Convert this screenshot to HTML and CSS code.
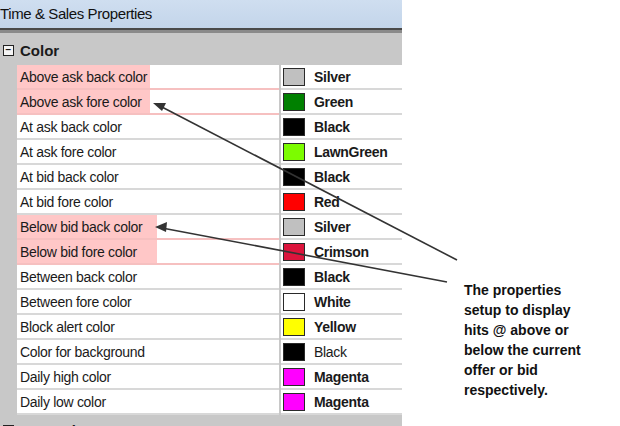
FILE: index.html
```html
<!DOCTYPE html>
<html lang="en">
<head>
    <meta charset="UTF-8">
    <title>Time &amp; Sales Properties</title>
    <link rel="stylesheet" href="styles.css">
</head>
<body>
    <div class="page">
        <div class="window">
            <div class="titlebar">Time &amp; Sales Properties</div>
            <div class="grid">
                <div class="category">
                    <span class="toggle">&minus;</span>
                    <span class="cat-name">Color</span>
                </div>
                <div class="row">
                    <div class="gutter"></div>
                    <div class="name hl">Above ask back color</div>
                    <div class="value"><span class="swatch" style="background:#c0c0c0"></span><b>Silver</b></div>
                </div>
                <div class="row">
                    <div class="gutter"></div>
                    <div class="name hl">Above ask fore color</div>
                    <div class="value"><span class="swatch" style="background:#008000"></span><b>Green</b></div>
                </div>
                <div class="row">
                    <div class="gutter"></div>
                    <div class="name">At ask back color</div>
                    <div class="value"><span class="swatch" style="background:#000"></span><b>Black</b></div>
                </div>
                <div class="row">
                    <div class="gutter"></div>
                    <div class="name">At ask fore color</div>
                    <div class="value"><span class="swatch" style="background:#7cfc00"></span><b>LawnGreen</b></div>
                </div>
                <div class="row">
                    <div class="gutter"></div>
                    <div class="name">At bid back color</div>
                    <div class="value"><span class="swatch" style="background:#000"></span><b>Black</b></div>
                </div>
                <div class="row">
                    <div class="gutter"></div>
                    <div class="name">At bid fore color</div>
                    <div class="value"><span class="swatch" style="background:#ff0000"></span><b>Red</b></div>
                </div>
                <div class="row">
                    <div class="gutter"></div>
                    <div class="name hl wide">Below bid back color</div>
                    <div class="value"><span class="swatch" style="background:#c0c0c0"></span><b>Silver</b></div>
                </div>
                <div class="row">
                    <div class="gutter"></div>
                    <div class="name hl wide">Below bid fore color</div>
                    <div class="value"><span class="swatch" style="background:#dc143c"></span><b>Crimson</b></div>
                </div>
                <div class="row">
                    <div class="gutter"></div>
                    <div class="name">Between back color</div>
                    <div class="value"><span class="swatch" style="background:#000"></span><b>Black</b></div>
                </div>
                <div class="row">
                    <div class="gutter"></div>
                    <div class="name">Between fore color</div>
                    <div class="value"><span class="swatch" style="background:#fff"></span><b>White</b></div>
                </div>
                <div class="row">
                    <div class="gutter"></div>
                    <div class="name">Block alert color</div>
                    <div class="value"><span class="swatch" style="background:#ffff00"></span><b>Yellow</b></div>
                </div>
                <div class="row">
                    <div class="gutter"></div>
                    <div class="name">Color for background</div>
                    <div class="value"><span class="swatch" style="background:#000"></span>Black</div>
                </div>
                <div class="row">
                    <div class="gutter"></div>
                    <div class="name">Daily high color</div>
                    <div class="value"><span class="swatch" style="background:#ff00ff"></span><b>Magenta</b></div>
                </div>
                <div class="row">
                    <div class="gutter"></div>
                    <div class="name">Daily low color</div>
                    <div class="value"><span class="swatch" style="background:#ff00ff"></span><b>Magenta</b></div>
                </div>
                <div class="category">
                    <span class="toggle">&minus;</span>
                    <span class="cat-name">General</span>
                </div>
            </div>
        </div>
        <p class="note">The properties setup to display hits @ above or below the current offer or bid respectively.</p>
    </div>

    <!-- callout arrows -->
    <svg class="arrows" width="620" height="426" viewBox="0 0 620 426">
        <line x1="457" y1="260" x2="160" y2="106" />
        <polygon points="153,103 166,103 162,111" />
        <line x1="447" y1="282" x2="162" y2="228" />
        <polygon points="155,227 167,222 166,232" />
    </svg>
</body>
</html>
```

FILE: styles.css
```css
body {
    margin: 0;
    background: #fff;
    font-family: "Liberation Sans", Arial, sans-serif;
    color: #1a1a1a;
}
.page {
    display: flex;
    align-items: flex-start;
    height: 426px;
    overflow: hidden;
}
.window {
    width: 402px;
    flex-shrink: 0;
}
.titlebar {
    height: 28px;
    line-height: 27px;
    font-size: 15px;
    letter-spacing: -0.4px;
    color: #111;
    background: linear-gradient(#cfdef0, #c3d5ea);
    border-bottom: 2px solid #4a4a4a;
}
.grid {
    background: #c8c8c8;
    border-top: 3px solid #8a8a8a;
    padding-top: 2px;
}
.category {
    display: flex;
    align-items: center;
    height: 30px;
    font-weight: bold;
    font-size: 15px;
}
.toggle {
    width: 9px;
    height: 9px;
    margin: 0 6px 0 3px;
    border: 1px solid #222;
    background: #f4f4f4;
    font-size: 10px;
    line-height: 8px;
    text-align: center;
    font-weight: bold;
}
.row {
    display: flex;
    height: 25px;
    font-size: 14px;
}
.gutter {
    width: 17px;
    background: #c8c8c8;
}
.name {
    width: 262px;
    padding-left: 3px;
    margin-right: 2px;
    line-height: 25px;
    background: #fff;
    border-bottom: 2px solid #d8d8d8;
    box-sizing: border-box;
    letter-spacing: -0.3px;
}
.name.hl {
    background: linear-gradient(#ffc7c7, #ffc7c7) no-repeat #fff;
    background-size: 133px 100%;
    border-bottom-color: #f6c0c0;
}
.name.hl.wide {
    background-size: 140px 100%;
}
.value {
    flex: 1;
    display: flex;
    align-items: center;
    padding-left: 2px;
    background: #fff;
    border-bottom: 2px solid #d8d8d8;
    box-sizing: border-box;
    letter-spacing: -0.3px;
}
.swatch {
    width: 20px;
    height: 16px;
    margin-right: 9px;
    border: 1px solid #2a2a2a;
}
.note {
    width: 132px;
    margin: 280px 0 0 62px;
    font-size: 14px;
    font-weight: bold;
    line-height: 20px;
    color: #111;
}
.arrows {
    position: absolute;
    top: 0;
    left: 0;
}
.arrows line {
    stroke: #333;
    stroke-width: 1.6;
}
.arrows polygon {
    fill: #333;
}
```
